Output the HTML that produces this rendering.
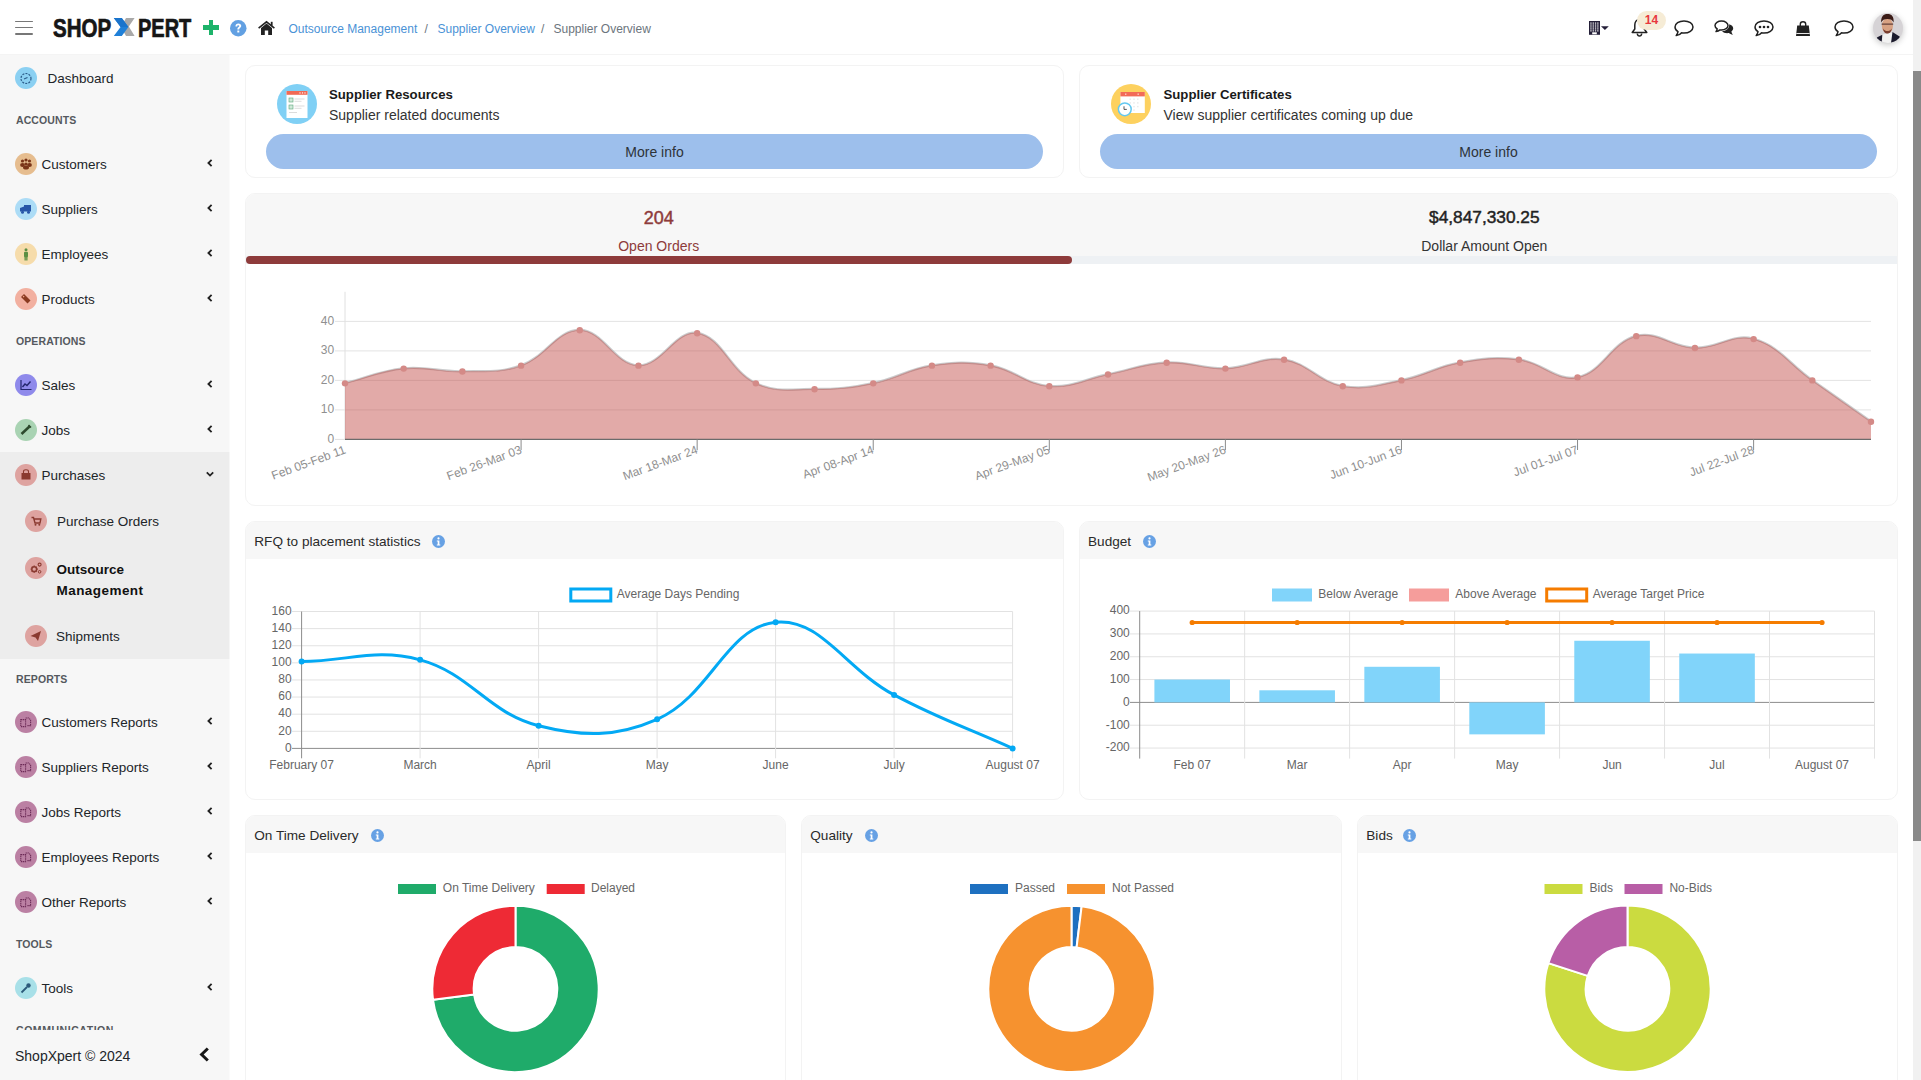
<!DOCTYPE html>
<html><head><meta charset="utf-8"><title>Supplier Overview</title>
<style>
html,body{margin:0;padding:0;}
body{width:1921px;height:1080px;overflow:hidden;position:relative;background:#fff;font-family:"Liberation Sans", sans-serif;}
div,svg{box-sizing:border-box;}
svg{position:absolute;overflow:visible;}
</style></head><body>

<div style="position:absolute;left:0px;top:54px;width:1913px;height:1px;background:#f4f4f4"></div>
<div style="position:absolute;left:15px;top:20.5px;width:18px;height:1.7px;background:#777;border-radius:1px"></div>
<div style="position:absolute;left:15px;top:26.7px;width:18px;height:1.7px;background:#777;border-radius:1px"></div>
<div style="position:absolute;left:15px;top:32.9px;width:18px;height:1.7px;background:#777;border-radius:1px"></div>
<div style="position:absolute;left:52.50px;top:15.54px;font-size:25px;line-height:25px;color:#161616;font-weight:bold;white-space:nowrap;transform:scaleX(0.82);transform-origin:0 0;-webkit-text-stroke:0.7px #161616">SHOP</div>
<svg style="left:113px;top:18px" width="23" height="19" viewBox="0 0 23 19">
<polygon points="13,0 21.6,0 15.8,8.6 21.6,18 13,18 8,9" fill="#a9a9a9"/>
<polygon points="0.8,0 8.8,0 15.4,9 8.8,18 0.8,18 7.6,9" fill="#1f80d8"/>
<polygon points="0.8,0 8.8,0 15.4,9 7.6,9" fill="#1a74cc"/>
</svg>
<div style="position:absolute;left:137.50px;top:15.54px;font-size:25px;line-height:25px;color:#161616;font-weight:bold;white-space:nowrap;transform:scaleX(0.80);transform-origin:0 0;-webkit-text-stroke:0.7px #161616">PERT</div>
<div style="position:absolute;left:208.5px;top:20px;width:4.6px;height:15px;background:#1db36a"></div>
<div style="position:absolute;left:203px;top:25.2px;width:15.5px;height:4.6px;background:#1db36a"></div>
<svg style="left:229.8px;top:19.8px" width="16.5" height="16.5" viewBox="0 0 16 16">
<circle cx="8" cy="8" r="8" fill="#62a0e2"/>
<path d="M5.3,6.2 C5.3,4.4 6.5,3.5 8.1,3.5 C9.8,3.5 10.9,4.5 10.9,5.8 C10.9,7.6 8.9,7.6 8.9,9.2 L7.1,9.2 C7.1,7 9,7.1 9,5.9 C9,5.3 8.6,5 8,5 C7.3,5 7,5.5 7,6.2 Z" fill="#fff"/>
<rect x="7.1" y="10.2" width="1.9" height="1.9" fill="#fff"/>
</svg>
<svg style="left:258px;top:21px" width="17" height="14" viewBox="0 0 17 14">
<path d="M0.6,7.2 L8.5,0.8 L16.4,7.2" stroke="#222" stroke-width="1.6" fill="none"/>
<rect x="12.8" y="0.8" width="1.8" height="4" fill="#222"/>
<path d="M3,7 L8.5,2.6 L14,7 L14,14 L10.2,14 L10.2,9.5 L6.8,9.5 L6.8,14 L3,14 Z" fill="#222"/>
</svg>
<div style="position:absolute;left:288.50px;top:22.84px;font-size:12px;line-height:12px;color:#4a92d6;font-weight:normal;white-space:nowrap;">Outsource Management</div>
<div style="position:absolute;left:424.50px;top:22.84px;font-size:12px;line-height:12px;color:#6c757d;font-weight:normal;white-space:nowrap;">/</div>
<div style="position:absolute;left:437.50px;top:22.84px;font-size:12px;line-height:12px;color:#4a92d6;font-weight:normal;white-space:nowrap;">Supplier Overview</div>
<div style="position:absolute;left:541.00px;top:22.84px;font-size:12px;line-height:12px;color:#6c757d;font-weight:normal;white-space:nowrap;">/</div>
<div style="position:absolute;left:553.50px;top:22.84px;font-size:12px;line-height:12px;color:#6c757d;font-weight:normal;white-space:nowrap;">Supplier Overview</div>
<svg style="left:1589px;top:21px" width="21" height="14" viewBox="0 0 21 14">
<rect x="0" y="0" width="11" height="13.8" fill="#241f38"/>
<g fill="#fff"><rect x="1.30" y="1.50" width="1.3" height="1.15"/><rect x="1.30" y="3.45" width="1.3" height="1.15"/><rect x="1.30" y="5.40" width="1.3" height="1.15"/><rect x="1.30" y="7.35" width="1.3" height="1.15"/><rect x="1.30" y="9.30" width="1.3" height="1.15"/><rect x="3.60" y="1.50" width="1.3" height="1.15"/><rect x="3.60" y="3.45" width="1.3" height="1.15"/><rect x="3.60" y="5.40" width="1.3" height="1.15"/><rect x="3.60" y="7.35" width="1.3" height="1.15"/><rect x="3.60" y="9.30" width="1.3" height="1.15"/><rect x="5.90" y="1.50" width="1.3" height="1.15"/><rect x="5.90" y="3.45" width="1.3" height="1.15"/><rect x="5.90" y="5.40" width="1.3" height="1.15"/><rect x="5.90" y="7.35" width="1.3" height="1.15"/><rect x="5.90" y="9.30" width="1.3" height="1.15"/><rect x="8.20" y="1.50" width="1.3" height="1.15"/><rect x="8.20" y="3.45" width="1.3" height="1.15"/><rect x="8.20" y="5.40" width="1.3" height="1.15"/><rect x="8.20" y="7.35" width="1.3" height="1.15"/><rect x="8.20" y="9.30" width="1.3" height="1.15"/><rect x="3.2" y="11.3" width="4.6" height="2"/></g>
<polygon points="12,5.3 19.8,5.3 15.9,8.9" fill="#241f38"/>
</svg>
<svg style="left:1631px;top:17.5px" width="17" height="19" viewBox="0 0 17 19">
<path d="M8.5,1.5 C5.3,1.5 3.8,4 3.8,7 L3.8,11 L1.2,14.5 L15.8,14.5 L13.2,11 L13.2,7 C13.2,4 11.7,1.5 8.5,1.5 Z" stroke="#222" stroke-width="1.5" fill="none" stroke-linejoin="round"/>
<path d="M6.3,15.5 C6.5,17.3 7.4,18 8.5,18 C9.6,18 10.5,17.3 10.7,15.5" stroke="#222" stroke-width="1.5" fill="none"/>
</svg>
<div style="position:absolute;left:1637px;top:10.5px;width:29px;height:19.5px;background:#f6ecd6;border-radius:10px"></div>
<div style="position:absolute;left:1636.50px;top:14.24px;width:30px;text-align:center;font-size:12px;line-height:12px;color:#e8383d;font-weight:bold;white-space:nowrap;">14</div>
<svg style="left:1673.5px;top:19.8px" width="20" height="17" viewBox="0 0 20 17">
<path d="M10,1 C5,1 1,3.6 1,7 C1,8.9 2.2,10.5 4,11.6 C3.8,13 3.2,14.3 2.2,15.6 C4.6,15.3 6.5,14.3 7.6,12.8 C8.4,12.95 9.2,13 10,13 C15,13 19,10.4 19,7 C19,3.6 15,1 10,1 Z" stroke="#222" stroke-width="1.5" fill="none" stroke-linejoin="round"/>
</svg>
<svg style="left:1713.5px;top:20px" width="20" height="16" viewBox="0 0 20 16">
<path d="M7.5,1 C3.9,1 1,3 1,5.5 C1,6.9 1.9,8.1 3.2,8.9 C3,9.9 2.6,10.8 2,11.6 C3.7,11.4 5,10.8 5.9,9.9 C6.4,10 7,10 7.5,10 C11.1,10 14,8 14,5.5 C14,3 11.1,1 7.5,1 Z" stroke="#222" stroke-width="1.5" fill="none" stroke-linejoin="round"/>
<path d="M15.2,4.2 C17.6,4.8 19.2,6.4 19.2,8.3 C19.2,9.6 18.5,10.7 17.4,11.5 C17.6,12.6 18.1,13.7 18.9,14.8 C17.2,14.6 15.8,14 14.8,13.1 C14.3,13.2 13.8,13.2 13.2,13.2 C11,13.2 9.1,12.4 8,11.2 C12,11 15.6,8.6 15.2,4.2 Z" fill="#222"/>
</svg>
<svg style="left:1753.5px;top:19.8px" width="20" height="17" viewBox="0 0 20 17">
<path d="M10,1 C5,1 1,3.6 1,7 C1,8.9 2.2,10.5 4,11.6 C3.8,13 3.2,14.3 2.2,15.6 C4.6,15.3 6.5,14.3 7.6,12.8 C8.4,12.95 9.2,13 10,13 C15,13 19,10.4 19,7 C19,3.6 15,1 10,1 Z" stroke="#222" stroke-width="1.5" fill="none" stroke-linejoin="round"/>
<circle cx="6" cy="7" r="1.3" fill="#222"/><circle cx="10" cy="7" r="1.3" fill="#222"/><circle cx="14" cy="7" r="1.3" fill="#222"/>
</svg>
<svg style="left:1796px;top:20.5px" width="14" height="15" viewBox="0 0 14 15">
<path d="M4.3,5 L4.3,3.2 C4.3,1.8 5.4,0.8 7,0.8 C8.6,0.8 9.7,1.8 9.7,3.2 L9.7,5" stroke="#222" stroke-width="1.4" fill="none"/>
<path d="M1.2,4.5 L12.8,4.5 L14,15 L0,15 Z" fill="#222"/>
<rect x="0.3" y="12" width="13.4" height="0.9" fill="#fff"/>
</svg>
<svg style="left:1833.5px;top:19.8px" width="20" height="17" viewBox="0 0 20 17">
<path d="M10,1 C5,1 1,3.6 1,7 C1,8.9 2.2,10.5 4,11.6 C3.8,13 3.2,14.3 2.2,15.6 C4.6,15.3 6.5,14.3 7.6,12.8 C8.4,12.95 9.2,13 10,13 C15,13 19,10.4 19,7 C19,3.6 15,1 10,1 Z" stroke="#222" stroke-width="1.5" fill="none" stroke-linejoin="round"/>
</svg>
<div style="position:absolute;left:1873px;top:13px;width:30px;height:30px;border-radius:50%;background:#d6d3d6;box-shadow:0 2px 6px rgba(0,0,0,0.22);overflow:hidden">
<svg style="left:0;top:0" width="30" height="30" viewBox="0 0 30 30">
<polygon points="9.3,21.5 19.5,19.5 19.5,30 9.3,30" fill="#f2f2f2"/>
<polygon points="3.9,24.6 9.3,21.8 8.6,30 3,30" fill="#1b1a2c"/>
<polygon points="19.5,19.1 26.9,23.8 27,30 18,30" fill="#1b1a2c"/>
<ellipse cx="14.4" cy="12.8" rx="5.6" ry="7.4" fill="#d8a283"/>
<path d="M8.2,9.5 C7.8,3.5 10.5,1 14.5,1 C18.5,1 21.2,3.5 20.6,9.5 C19.6,7 17.5,6 14.4,6 C11.4,6 9.2,7 8.2,9.5 Z" fill="#3a1b16"/>
<rect x="8.6" y="10.6" width="11.6" height="1" fill="#4a2a28"/>
<path d="M10,15.5 C10.5,19.5 12.5,20.5 14.4,20.5 C16.3,20.5 18.3,19.5 18.8,15.5 C17.5,17.5 16,18 14.4,18 C12.8,18 11.3,17.5 10,15.5 Z" fill="#7a3f30"/>
</svg></div>
<div style="position:absolute;left:1913px;top:0px;width:8px;height:1080px;background:#f1f1f1"></div>
<div style="position:absolute;left:1913px;top:71px;width:8px;height:770px;background:#898989"></div>
<div style="position:absolute;left:0px;top:55px;width:229px;height:1025px;background:#f7f7f7;box-shadow:1px 0 0 #fbfbfb"></div>
<div style="position:absolute;left:0px;top:452px;width:229px;height:207px;background:#ededed;box-shadow:1px 0 0 #f6f6f6"></div>
<svg style="left:15px;top:67px" width="22" height="22" viewBox="0 0 22 22"><circle cx="11" cy="11" r="11" fill="#8bd0f2"/><circle cx="11" cy="11.5" r="5" stroke="#2b5c8a" stroke-width="1.2" fill="none" stroke-dasharray="2 1.2"/><path d="M9,12 L12.5,10.5" stroke="#2b5c8a" stroke-width="1.2"/></svg>
<div style="position:absolute;left:47.50px;top:71.57px;font-size:13.5px;line-height:13.5px;color:#212529;font-weight:normal;white-space:nowrap;">Dashboard</div>
<div style="position:absolute;left:16.00px;top:114.91px;font-size:10.5px;line-height:10.5px;color:#55595e;font-weight:bold;white-space:nowrap;letter-spacing:0.1px">ACCOUNTS</div>
<svg style="left:15px;top:153px" width="22" height="22" viewBox="0 0 22 22"><circle cx="11" cy="11" r="11" fill="#e6bd8f"/><g fill="#7a3518"><circle cx="7.5" cy="8" r="1.6"/><circle cx="11" cy="7" r="1.6"/><circle cx="14.5" cy="8" r="1.6"/><ellipse cx="7.5" cy="12" rx="2.4" ry="2"/><ellipse cx="14.5" cy="12" rx="2.4" ry="2"/><circle cx="11" cy="11" r="1.6"/><ellipse cx="11" cy="14.5" rx="3" ry="2"/></g></svg>
<div style="position:absolute;left:41.50px;top:157.57px;font-size:13.5px;line-height:13.5px;color:#212529;font-weight:normal;white-space:nowrap;">Customers</div>
<svg style="left:207px;top:159px" width="6" height="8" viewBox="0 0 6 8"><path d="M4.6,0.8 L1.4,4 L4.6,7.2" stroke="#222" stroke-width="1.8" fill="none"/></svg>
<svg style="left:15px;top:198px" width="22" height="22" viewBox="0 0 22 22"><circle cx="11" cy="11" r="11" fill="#acdcf6"/><g fill="#2756a8"><rect x="9" y="7" width="7" height="6.5"/><path d="M5,10 L9,8.5 L9,13.5 L5,13.5 Z"/><circle cx="7.5" cy="14.2" r="1.5"/><circle cx="13.5" cy="14.2" r="1.5"/></g></svg>
<div style="position:absolute;left:41.50px;top:202.57px;font-size:13.5px;line-height:13.5px;color:#212529;font-weight:normal;white-space:nowrap;">Suppliers</div>
<svg style="left:207px;top:204px" width="6" height="8" viewBox="0 0 6 8"><path d="M4.6,0.8 L1.4,4 L4.6,7.2" stroke="#222" stroke-width="1.8" fill="none"/></svg>
<svg style="left:15px;top:243px" width="22" height="22" viewBox="0 0 22 22"><circle cx="11" cy="11" r="11" fill="#f6dcab"/><g fill="#5c8f44"><circle cx="11" cy="6.8" r="1.5"/><rect x="9" y="8.8" width="4" height="5.5" rx="1"/><rect x="9.5" y="14" width="1.3" height="3.5"/><rect x="11.2" y="14" width="1.3" height="3.5"/></g></svg>
<div style="position:absolute;left:41.50px;top:247.57px;font-size:13.5px;line-height:13.5px;color:#212529;font-weight:normal;white-space:nowrap;">Employees</div>
<svg style="left:207px;top:249px" width="6" height="8" viewBox="0 0 6 8"><path d="M4.6,0.8 L1.4,4 L4.6,7.2" stroke="#222" stroke-width="1.8" fill="none"/></svg>
<svg style="left:15px;top:288px" width="22" height="22" viewBox="0 0 22 22"><circle cx="11" cy="11" r="11" fill="#f2b0a0"/><path d="M6,9 L9,6 L15.5,12.5 L12.5,15.5 Z" fill="#8a3a20"/><circle cx="8.6" cy="8.6" r="0.8" fill="#f0a08a"/></svg>
<div style="position:absolute;left:41.50px;top:292.57px;font-size:13.5px;line-height:13.5px;color:#212529;font-weight:normal;white-space:nowrap;">Products</div>
<svg style="left:207px;top:294px" width="6" height="8" viewBox="0 0 6 8"><path d="M4.6,0.8 L1.4,4 L4.6,7.2" stroke="#222" stroke-width="1.8" fill="none"/></svg>
<div style="position:absolute;left:16.00px;top:336.11px;font-size:10.5px;line-height:10.5px;color:#55595e;font-weight:bold;white-space:nowrap;letter-spacing:0.1px">OPERATIONS</div>
<svg style="left:15px;top:374px" width="22" height="22" viewBox="0 0 22 22"><circle cx="11" cy="11" r="11" fill="#8f8aeb"/><path d="M6,6 L6,15.5 L16.5,15.5" stroke="#23266e" stroke-width="1.2" fill="none"/><path d="M7.5,13 L10,10 L12,11.5 L15.5,7.5" stroke="#23266e" stroke-width="1.4" fill="none"/></svg>
<div style="position:absolute;left:41.50px;top:378.57px;font-size:13.5px;line-height:13.5px;color:#212529;font-weight:normal;white-space:nowrap;">Sales</div>
<svg style="left:207px;top:380px" width="6" height="8" viewBox="0 0 6 8"><path d="M4.6,0.8 L1.4,4 L4.6,7.2" stroke="#222" stroke-width="1.8" fill="none"/></svg>
<svg style="left:15px;top:419px" width="22" height="22" viewBox="0 0 22 22"><circle cx="11" cy="11" r="11" fill="#a9d3b3"/><path d="M6.5,15 L15,7" stroke="#2d4a2d" stroke-width="2.6"/><path d="M13.5,6 L16,8.5" stroke="#2d4a2d" stroke-width="1.6"/></svg>
<div style="position:absolute;left:41.50px;top:423.57px;font-size:13.5px;line-height:13.5px;color:#212529;font-weight:normal;white-space:nowrap;">Jobs</div>
<svg style="left:207px;top:425px" width="6" height="8" viewBox="0 0 6 8"><path d="M4.6,0.8 L1.4,4 L4.6,7.2" stroke="#222" stroke-width="1.8" fill="none"/></svg>
<svg style="left:15px;top:464px" width="22" height="22" viewBox="0 0 22 22"><circle cx="11" cy="11" r="11" fill="#dea3a0"/><path d="M8.5,9 L8.5,7.5 C8.5,6.3 9.5,5.8 11,5.8 C12.5,5.8 13.5,6.3 13.5,7.5 L13.5,9" stroke="#8a3a30" stroke-width="1.1" fill="none"/><rect x="6.5" y="9" width="9" height="6.5" fill="#8a3a30"/></svg>
<div style="position:absolute;left:41.50px;top:468.57px;font-size:13.5px;line-height:13.5px;color:#212529;font-weight:normal;white-space:nowrap;">Purchases</div>
<svg style="left:205.5px;top:471px" width="8" height="6" viewBox="0 0 8 6"><path d="M0.8,1.4 L4,4.6 L7.2,1.4" stroke="#222" stroke-width="1.8" fill="none"/></svg>
<svg style="left:25px;top:510px" width="22" height="22" viewBox="0 0 22 22"><circle cx="11" cy="11" r="11" fill="#dea3a0"/><path d="M6.5,7.5 L8.5,7.5 L10,13 L15,13 L15.8,9 L9,9" stroke="#8a3a30" stroke-width="1.4" fill="none"/><circle cx="10.5" cy="14.8" r="1" fill="#8a3a30"/><circle cx="14.3" cy="14.8" r="1" fill="#8a3a30"/></svg>
<div style="position:absolute;left:57.00px;top:514.57px;font-size:13.5px;line-height:13.5px;color:#212529;font-weight:normal;white-space:nowrap;">Purchase Orders</div>
<svg style="left:25px;top:556.5px" width="22" height="22" viewBox="0 0 22 22"><circle cx="11" cy="11" r="11" fill="#dea3a0"/><circle cx="9.2" cy="12.2" r="2.4" stroke="#8a3a30" stroke-width="1.5" fill="none"/><g stroke="#8a3a30" stroke-width="1.3"><path d="M9.2,8.6 V9.4 M9.2,15 V15.8 M5.6,12.2 H6.4 M12,12.2 H12.8 M6.7,9.7 L7.2,10.2 M11.2,14.2 L11.7,14.7 M6.7,14.7 L7.2,14.2 M11.2,10.2 L11.7,9.7"/></g><circle cx="14.6" cy="7.6" r="1.5" stroke="#8a3a30" stroke-width="1.1" fill="none"/><circle cx="14.6" cy="14.8" r="1.3" stroke="#8a3a30" stroke-width="1" fill="none"/></svg>
<div style="position:absolute;left:56.50px;top:563.07px;font-size:13.5px;line-height:13.5px;color:#111;font-weight:bold;white-space:nowrap;">Outsource</div>
<div style="position:absolute;left:56.50px;top:583.87px;font-size:13.5px;line-height:13.5px;color:#111;font-weight:bold;white-space:nowrap;letter-spacing:0.45px">Management</div>
<svg style="left:25px;top:625px" width="22" height="22" viewBox="0 0 22 22"><circle cx="11" cy="11" r="11" fill="#dea3a0"/><path d="M5.5,11 L16,6 L13,16 L10.5,12.5 Z" fill="#8a3a30"/></svg>
<div style="position:absolute;left:56.00px;top:629.57px;font-size:13.5px;line-height:13.5px;color:#212529;font-weight:normal;white-space:nowrap;">Shipments</div>
<div style="position:absolute;left:16.00px;top:674.11px;font-size:10.5px;line-height:10.5px;color:#55595e;font-weight:bold;white-space:nowrap;letter-spacing:0.1px">REPORTS</div>
<svg style="left:15px;top:711px" width="22" height="22" viewBox="0 0 22 22"><circle cx="11" cy="11" r="11" fill="#bb80a3"/><path d="M5.8,8.6 L10.6,8.6 L10.6,15.6 L5.8,15.6 Z" stroke="#6e2c58" stroke-width="1.1" fill="none" stroke-dasharray="1.3 0.6"/><path d="M10.6,7 L13.6,7 L15.6,9 L15.6,14.6 L12,14.6" stroke="#6e2c58" stroke-width="1.1" fill="none" stroke-dasharray="1.3 0.6"/></svg>
<div style="position:absolute;left:41.50px;top:715.57px;font-size:13.5px;line-height:13.5px;color:#212529;font-weight:normal;white-space:nowrap;">Customers Reports</div>
<svg style="left:207px;top:717px" width="6" height="8" viewBox="0 0 6 8"><path d="M4.6,0.8 L1.4,4 L4.6,7.2" stroke="#222" stroke-width="1.8" fill="none"/></svg>
<svg style="left:15px;top:756px" width="22" height="22" viewBox="0 0 22 22"><circle cx="11" cy="11" r="11" fill="#bb80a3"/><path d="M5.8,8.6 L10.6,8.6 L10.6,15.6 L5.8,15.6 Z" stroke="#6e2c58" stroke-width="1.1" fill="none" stroke-dasharray="1.3 0.6"/><path d="M10.6,7 L13.6,7 L15.6,9 L15.6,14.6 L12,14.6" stroke="#6e2c58" stroke-width="1.1" fill="none" stroke-dasharray="1.3 0.6"/></svg>
<div style="position:absolute;left:41.50px;top:760.57px;font-size:13.5px;line-height:13.5px;color:#212529;font-weight:normal;white-space:nowrap;">Suppliers Reports</div>
<svg style="left:207px;top:762px" width="6" height="8" viewBox="0 0 6 8"><path d="M4.6,0.8 L1.4,4 L4.6,7.2" stroke="#222" stroke-width="1.8" fill="none"/></svg>
<svg style="left:15px;top:801px" width="22" height="22" viewBox="0 0 22 22"><circle cx="11" cy="11" r="11" fill="#bb80a3"/><path d="M5.8,8.6 L10.6,8.6 L10.6,15.6 L5.8,15.6 Z" stroke="#6e2c58" stroke-width="1.1" fill="none" stroke-dasharray="1.3 0.6"/><path d="M10.6,7 L13.6,7 L15.6,9 L15.6,14.6 L12,14.6" stroke="#6e2c58" stroke-width="1.1" fill="none" stroke-dasharray="1.3 0.6"/></svg>
<div style="position:absolute;left:41.50px;top:805.57px;font-size:13.5px;line-height:13.5px;color:#212529;font-weight:normal;white-space:nowrap;">Jobs Reports</div>
<svg style="left:207px;top:807px" width="6" height="8" viewBox="0 0 6 8"><path d="M4.6,0.8 L1.4,4 L4.6,7.2" stroke="#222" stroke-width="1.8" fill="none"/></svg>
<svg style="left:15px;top:846px" width="22" height="22" viewBox="0 0 22 22"><circle cx="11" cy="11" r="11" fill="#bb80a3"/><path d="M5.8,8.6 L10.6,8.6 L10.6,15.6 L5.8,15.6 Z" stroke="#6e2c58" stroke-width="1.1" fill="none" stroke-dasharray="1.3 0.6"/><path d="M10.6,7 L13.6,7 L15.6,9 L15.6,14.6 L12,14.6" stroke="#6e2c58" stroke-width="1.1" fill="none" stroke-dasharray="1.3 0.6"/></svg>
<div style="position:absolute;left:41.50px;top:850.57px;font-size:13.5px;line-height:13.5px;color:#212529;font-weight:normal;white-space:nowrap;">Employees Reports</div>
<svg style="left:207px;top:852px" width="6" height="8" viewBox="0 0 6 8"><path d="M4.6,0.8 L1.4,4 L4.6,7.2" stroke="#222" stroke-width="1.8" fill="none"/></svg>
<svg style="left:15px;top:891px" width="22" height="22" viewBox="0 0 22 22"><circle cx="11" cy="11" r="11" fill="#bb80a3"/><path d="M5.8,8.6 L10.6,8.6 L10.6,15.6 L5.8,15.6 Z" stroke="#6e2c58" stroke-width="1.1" fill="none" stroke-dasharray="1.3 0.6"/><path d="M10.6,7 L13.6,7 L15.6,9 L15.6,14.6 L12,14.6" stroke="#6e2c58" stroke-width="1.1" fill="none" stroke-dasharray="1.3 0.6"/></svg>
<div style="position:absolute;left:41.50px;top:895.57px;font-size:13.5px;line-height:13.5px;color:#212529;font-weight:normal;white-space:nowrap;">Other Reports</div>
<svg style="left:207px;top:897px" width="6" height="8" viewBox="0 0 6 8"><path d="M4.6,0.8 L1.4,4 L4.6,7.2" stroke="#222" stroke-width="1.8" fill="none"/></svg>
<div style="position:absolute;left:16.00px;top:939.11px;font-size:10.5px;line-height:10.5px;color:#55595e;font-weight:bold;white-space:nowrap;letter-spacing:0.1px">TOOLS</div>
<svg style="left:15px;top:977px" width="22" height="22" viewBox="0 0 22 22"><circle cx="11" cy="11" r="11" fill="#a8e0e8"/><path d="M6.5,15.5 L12,10" stroke="#2b5a7a" stroke-width="1.8"/><circle cx="13.5" cy="8.5" r="2.2" fill="#2b5a7a"/></svg>
<div style="position:absolute;left:41.50px;top:981.57px;font-size:13.5px;line-height:13.5px;color:#212529;font-weight:normal;white-space:nowrap;">Tools</div>
<svg style="left:207px;top:983px" width="6" height="8" viewBox="0 0 6 8"><path d="M4.6,0.8 L1.4,4 L4.6,7.2" stroke="#222" stroke-width="1.8" fill="none"/></svg>
<div style="position:absolute;left:0;top:1000px;width:230px;height:30px;overflow:hidden"><div style="position:absolute;left:16.00px;top:25.11px;font-size:10.5px;line-height:10.5px;color:#55595e;font-weight:bold;white-space:nowrap;letter-spacing:0.55px">COMMUNICATION</div></div>
<div style="position:absolute;left:15.00px;top:1048.75px;font-size:14px;line-height:14px;color:#212529;font-weight:normal;white-space:nowrap;">ShopXpert &copy; 2024</div>
<svg style="left:199px;top:1047px" width="11" height="15" viewBox="0 0 11 15"><path d="M8.8,1.5 L2.6,7.5 L8.8,13.5" stroke="#161616" stroke-width="3" fill="none"/></svg>
<div style="position:absolute;left:245px;top:65px;width:819px;height:113px;border:1px solid #f3f3f3;border-radius:10px;background:#fff;overflow:hidden;"></div>
<div style="position:absolute;left:329.00px;top:87.83px;font-size:13.2px;line-height:13.2px;color:#1a1a1a;font-weight:bold;white-space:nowrap;">Supplier Resources</div>
<div style="position:absolute;left:329.00px;top:107.95px;font-size:14px;line-height:14px;color:#333;font-weight:normal;white-space:nowrap;">Supplier related documents</div>
<div style="position:absolute;left:266px;top:134px;width:777px;height:35px;background:#9dbfec;border-radius:17.5px"></div>
<div style="position:absolute;left:554.50px;top:145.45px;width:200px;text-align:center;font-size:14px;line-height:14px;color:#2d3338;font-weight:normal;white-space:nowrap;">More info</div>
<svg style="left:277px;top:84px" width="40" height="40" viewBox="0 0 40 40"><circle cx="20" cy="20" r="20" fill="#80d0f5"/></svg>
<div style="position:absolute;left:1079px;top:65px;width:819px;height:113px;border:1px solid #f3f3f3;border-radius:10px;background:#fff;overflow:hidden;"></div>
<div style="position:absolute;left:1163.50px;top:87.83px;font-size:13.2px;line-height:13.2px;color:#1a1a1a;font-weight:bold;white-space:nowrap;">Supplier Certificates</div>
<div style="position:absolute;left:1163.50px;top:107.95px;font-size:14px;line-height:14px;color:#333;font-weight:normal;white-space:nowrap;">View supplier certificates coming up due</div>
<div style="position:absolute;left:1100px;top:134px;width:777px;height:35px;background:#9dbfec;border-radius:17.5px"></div>
<div style="position:absolute;left:1388.50px;top:145.45px;width:200px;text-align:center;font-size:14px;line-height:14px;color:#2d3338;font-weight:normal;white-space:nowrap;">More info</div>
<svg style="left:1111.3px;top:84px" width="40" height="40" viewBox="0 0 40 40"><circle cx="20" cy="20" r="20" fill="#fdd15f"/></svg>
<svg style="left:277px;top:84px" width="40" height="40" viewBox="0 0 40 40">
<rect x="9.5" y="7" width="21" height="27" fill="#fff"/>
<rect x="9.5" y="7" width="21" height="3.8" fill="#f16a55"/>
<g fill="#fff"><circle cx="23" cy="8.9" r="0.7"/><circle cx="25.5" cy="8.9" r="0.7"/><circle cx="28" cy="8.9" r="0.7"/></g>
<rect x="12" y="14" width="4" height="4" fill="#cfe9d9" stroke="#5aa67a" stroke-width="0.6"/>
<rect x="12" y="21" width="4" height="4" fill="#cfe9d9" stroke="#5aa67a" stroke-width="0.6"/>
<g fill="#dcdcdc"><rect x="17.5" y="14.5" width="10" height="1"/><rect x="17.5" y="16.8" width="7" height="1"/><rect x="17.5" y="21.5" width="10" height="1"/><rect x="17.5" y="23.8" width="7" height="1"/><rect x="12" y="28" width="8" height="1"/></g>
</svg>
<svg style="left:1111.3px;top:84px" width="40" height="40" viewBox="0 0 40 40">
<rect x="9.4" y="8" width="24.4" height="21" fill="#fff"/>
<rect x="9.4" y="8" width="24.4" height="4.4" fill="#f26b58"/>
<g fill="#fbe6e0"><rect x="14" y="9.6" width="1.4" height="1.1"/><rect x="26.5" y="9.6" width="1.4" height="1.1"/></g>
<g fill="#e8e8e8"><rect x="18.5" y="14.5" width="1.4" height="1.4"/><rect x="22.3" y="14.5" width="1.4" height="1.4"/><rect x="26.1" y="14.5" width="1.4" height="1.4"/><rect x="18.5" y="18.2" width="1.4" height="1.4"/><rect x="22.3" y="18.2" width="1.4" height="1.4"/><rect x="26.1" y="18.2" width="1.4" height="1.4"/><rect x="22.3" y="21.9" width="1.4" height="1.4"/><rect x="26.1" y="21.9" width="1.4" height="1.4"/><rect x="22.3" y="25.4" width="1.4" height="1.4"/></g>
<circle cx="13.8" cy="25.3" r="6.4" fill="#fff" stroke="#63c8f0" stroke-width="1.5"/>
<path d="M13,22.3 L13,25.4 L15.8,25.4" stroke="#444" stroke-width="0.9" fill="none"/>
</svg>
<div style="position:absolute;left:245px;top:193px;width:1653px;height:313px;border:1px solid #f3f3f3;border-radius:10px;background:#fff;overflow:hidden"><div style="position:absolute;left:0;top:0;width:1651px;height:62px;background:#f7f7f7"></div><div style="position:absolute;left:0;top:62px;width:1651px;height:8px;background:#eef1f4"></div><div style="position:absolute;left:0;top:62px;width:826px;height:8px;background:#8e3b3b;border-radius:4px"></div></div>
<div style="position:absolute;left:558.70px;top:208.66px;width:200px;text-align:center;font-size:18px;line-height:18px;color:#8e3b3b;font-weight:normal;white-space:nowrap;-webkit-text-stroke:0.45px #8e3b3b">204</div>
<div style="position:absolute;left:558.70px;top:238.95px;width:200px;text-align:center;font-size:14px;line-height:14px;color:#8e3b3b;font-weight:normal;white-space:nowrap;">Open Orders</div>
<div style="position:absolute;left:1334.30px;top:209.26px;width:300px;text-align:center;font-size:17.3px;line-height:17.3px;color:#222;font-weight:normal;white-space:nowrap;-webkit-text-stroke:0.45px #222">$4,847,330.25</div>
<div style="position:absolute;left:1334.30px;top:238.95px;width:300px;text-align:center;font-size:14px;line-height:14px;color:#333;font-weight:normal;white-space:nowrap;">Dollar Amount Open</div>
<div style="position:absolute;left:245px;top:521px;width:819px;height:279px;border:1px solid #f3f3f3;border-radius:10px;background:#fff;overflow:hidden"><div style="position:absolute;left:0;top:0;width:819px;height:37px;background:#f7f7f7"></div></div>
<div style="position:absolute;left:1079px;top:521px;width:819px;height:279px;border:1px solid #f3f3f3;border-radius:10px;background:#fff;overflow:hidden"><div style="position:absolute;left:0;top:0;width:819px;height:37px;background:#f7f7f7"></div></div>
<div style="position:absolute;left:254.30px;top:534.89px;font-size:13.6px;line-height:13.6px;color:#2a2a2a;font-weight:normal;white-space:nowrap;">RFQ to placement statistics</div>
<svg style="left:432.3px;top:534.5px" width="13" height="13" viewBox="0 0 13 13"><circle cx="6.5" cy="6.5" r="6.5" fill="#67a1e4"/><circle cx="6.5" cy="3.4" r="1.1" fill="#fff"/><path d="M4.8,5.4 L7.4,5.4 L7.4,9.4 L8.3,9.4 L8.3,10.4 L4.8,10.4 L4.8,9.4 L5.7,9.4 L5.7,6.4 L4.8,6.4 Z" fill="#fff"/></svg>
<div style="position:absolute;left:1088.00px;top:534.89px;font-size:13.6px;line-height:13.6px;color:#2a2a2a;font-weight:normal;white-space:nowrap;">Budget</div>
<svg style="left:1143.3px;top:534.5px" width="13" height="13" viewBox="0 0 13 13"><circle cx="6.5" cy="6.5" r="6.5" fill="#67a1e4"/><circle cx="6.5" cy="3.4" r="1.1" fill="#fff"/><path d="M4.8,5.4 L7.4,5.4 L7.4,9.4 L8.3,9.4 L8.3,10.4 L4.8,10.4 L4.8,9.4 L5.7,9.4 L5.7,6.4 L4.8,6.4 Z" fill="#fff"/></svg>
<div style="position:absolute;left:245px;top:815px;width:541px;height:300px;border:1px solid #f3f3f3;border-radius:10px;background:#fff;overflow:hidden"><div style="position:absolute;left:0;top:0;width:541px;height:37px;background:#f7f7f7"></div></div>
<div style="position:absolute;left:254.30px;top:828.69px;font-size:13.6px;line-height:13.6px;color:#2a2a2a;font-weight:normal;white-space:nowrap;">On Time Delivery</div>
<svg style="left:370.5px;top:828.5px" width="13" height="13" viewBox="0 0 13 13"><circle cx="6.5" cy="6.5" r="6.5" fill="#67a1e4"/><circle cx="6.5" cy="3.4" r="1.1" fill="#fff"/><path d="M4.8,5.4 L7.4,5.4 L7.4,9.4 L8.3,9.4 L8.3,10.4 L4.8,10.4 L4.8,9.4 L5.7,9.4 L5.7,6.4 L4.8,6.4 Z" fill="#fff"/></svg>
<div style="position:absolute;left:801px;top:815px;width:541px;height:300px;border:1px solid #f3f3f3;border-radius:10px;background:#fff;overflow:hidden"><div style="position:absolute;left:0;top:0;width:541px;height:37px;background:#f7f7f7"></div></div>
<div style="position:absolute;left:810.30px;top:828.69px;font-size:13.6px;line-height:13.6px;color:#2a2a2a;font-weight:normal;white-space:nowrap;">Quality</div>
<svg style="left:864.5px;top:828.5px" width="13" height="13" viewBox="0 0 13 13"><circle cx="6.5" cy="6.5" r="6.5" fill="#67a1e4"/><circle cx="6.5" cy="3.4" r="1.1" fill="#fff"/><path d="M4.8,5.4 L7.4,5.4 L7.4,9.4 L8.3,9.4 L8.3,10.4 L4.8,10.4 L4.8,9.4 L5.7,9.4 L5.7,6.4 L4.8,6.4 Z" fill="#fff"/></svg>
<div style="position:absolute;left:1357px;top:815px;width:541px;height:300px;border:1px solid #f3f3f3;border-radius:10px;background:#fff;overflow:hidden"><div style="position:absolute;left:0;top:0;width:541px;height:37px;background:#f7f7f7"></div></div>
<div style="position:absolute;left:1366.30px;top:828.69px;font-size:13.6px;line-height:13.6px;color:#2a2a2a;font-weight:normal;white-space:nowrap;">Bids</div>
<svg style="left:1402.5px;top:828.5px" width="13" height="13" viewBox="0 0 13 13"><circle cx="6.5" cy="6.5" r="6.5" fill="#67a1e4"/><circle cx="6.5" cy="3.4" r="1.1" fill="#fff"/><path d="M4.8,5.4 L7.4,5.4 L7.4,9.4 L8.3,9.4 L8.3,10.4 L4.8,10.4 L4.8,9.4 L5.7,9.4 L5.7,6.4 L4.8,6.4 Z" fill="#fff"/></svg>
<svg style="left:0;top:0" width="1921" height="1080" viewBox="0 0 1921 1080">
<line x1="335" y1="409.90" x2="1871.0" y2="409.90" stroke="#e3e3e3" stroke-width="1"/>
<line x1="335" y1="380.40" x2="1871.0" y2="380.40" stroke="#e3e3e3" stroke-width="1"/>
<line x1="335" y1="350.90" x2="1871.0" y2="350.90" stroke="#e3e3e3" stroke-width="1"/>
<line x1="335" y1="321.40" x2="1871.0" y2="321.40" stroke="#e3e3e3" stroke-width="1"/>
<line x1="345.0" y1="291.8" x2="345.0" y2="439.4" stroke="#e0e0e0" stroke-width="1"/>
<line x1="335" y1="439.4" x2="345.0" y2="439.4" stroke="#e0e0e0" stroke-width="1"/>
<path d="M345.00,383.35 C368.48,377.45 379.87,370.99 403.69,368.60 C426.82,366.27 438.95,372.14 462.38,371.55 C485.91,370.96 499.36,373.29 521.08,365.65 C546.31,356.77 556.29,330.25 579.77,330.25 C603.25,330.25 614.73,365.05 638.46,365.65 C661.68,366.23 675.33,329.91 697.15,333.20 C722.28,336.99 729.23,370.64 755.85,383.35 C776.18,393.06 791.06,389.25 814.54,389.25 C838.02,389.25 850.21,387.98 873.23,383.35 C897.16,378.54 907.94,369.27 931.92,365.65 C954.89,362.19 967.82,361.64 990.62,365.65 C1014.78,369.90 1025.38,384.50 1049.31,386.30 C1072.33,388.04 1084.52,379.22 1108.00,374.50 C1131.48,369.78 1143.04,363.89 1166.69,362.70 C1190.00,361.53 1201.98,369.19 1225.38,368.60 C1248.93,368.01 1261.56,356.35 1284.08,359.75 C1308.51,363.43 1318.26,381.99 1342.77,386.30 C1365.21,390.25 1378.44,385.03 1401.46,380.40 C1425.39,375.59 1436.18,366.92 1460.15,362.70 C1483.13,358.66 1495.87,356.86 1518.85,359.75 C1542.82,362.76 1555.91,381.80 1577.54,377.45 C1602.86,372.36 1610.63,342.58 1636.23,336.15 C1657.59,330.78 1671.35,347.36 1694.92,347.95 C1718.30,348.54 1732.36,333.22 1753.62,339.10 C1779.31,346.20 1788.83,363.88 1812.31,380.40 C1835.78,396.92 1847.52,405.18 1871.00,421.70" fill="none" stroke="rgba(175,178,180,0.65)" stroke-width="2.2" transform="translate(0,-0.3)"/>
<path d="M345.00,383.35 C368.48,377.45 379.87,370.99 403.69,368.60 C426.82,366.27 438.95,372.14 462.38,371.55 C485.91,370.96 499.36,373.29 521.08,365.65 C546.31,356.77 556.29,330.25 579.77,330.25 C603.25,330.25 614.73,365.05 638.46,365.65 C661.68,366.23 675.33,329.91 697.15,333.20 C722.28,336.99 729.23,370.64 755.85,383.35 C776.18,393.06 791.06,389.25 814.54,389.25 C838.02,389.25 850.21,387.98 873.23,383.35 C897.16,378.54 907.94,369.27 931.92,365.65 C954.89,362.19 967.82,361.64 990.62,365.65 C1014.78,369.90 1025.38,384.50 1049.31,386.30 C1072.33,388.04 1084.52,379.22 1108.00,374.50 C1131.48,369.78 1143.04,363.89 1166.69,362.70 C1190.00,361.53 1201.98,369.19 1225.38,368.60 C1248.93,368.01 1261.56,356.35 1284.08,359.75 C1308.51,363.43 1318.26,381.99 1342.77,386.30 C1365.21,390.25 1378.44,385.03 1401.46,380.40 C1425.39,375.59 1436.18,366.92 1460.15,362.70 C1483.13,358.66 1495.87,356.86 1518.85,359.75 C1542.82,362.76 1555.91,381.80 1577.54,377.45 C1602.86,372.36 1610.63,342.58 1636.23,336.15 C1657.59,330.78 1671.35,347.36 1694.92,347.95 C1718.30,348.54 1732.36,333.22 1753.62,339.10 C1779.31,346.20 1788.83,363.88 1812.31,380.40 C1835.78,396.92 1847.52,405.18 1871.00,421.70 L1871.0,439.4 L345.0,439.4 Z" fill="rgba(191,66,62,0.45)"/>
<path d="M345.00,383.35 C368.48,377.45 379.87,370.99 403.69,368.60 C426.82,366.27 438.95,372.14 462.38,371.55 C485.91,370.96 499.36,373.29 521.08,365.65 C546.31,356.77 556.29,330.25 579.77,330.25 C603.25,330.25 614.73,365.05 638.46,365.65 C661.68,366.23 675.33,329.91 697.15,333.20 C722.28,336.99 729.23,370.64 755.85,383.35 C776.18,393.06 791.06,389.25 814.54,389.25 C838.02,389.25 850.21,387.98 873.23,383.35 C897.16,378.54 907.94,369.27 931.92,365.65 C954.89,362.19 967.82,361.64 990.62,365.65 C1014.78,369.90 1025.38,384.50 1049.31,386.30 C1072.33,388.04 1084.52,379.22 1108.00,374.50 C1131.48,369.78 1143.04,363.89 1166.69,362.70 C1190.00,361.53 1201.98,369.19 1225.38,368.60 C1248.93,368.01 1261.56,356.35 1284.08,359.75 C1308.51,363.43 1318.26,381.99 1342.77,386.30 C1365.21,390.25 1378.44,385.03 1401.46,380.40 C1425.39,375.59 1436.18,366.92 1460.15,362.70 C1483.13,358.66 1495.87,356.86 1518.85,359.75 C1542.82,362.76 1555.91,381.80 1577.54,377.45 C1602.86,372.36 1610.63,342.58 1636.23,336.15 C1657.59,330.78 1671.35,347.36 1694.92,347.95 C1718.30,348.54 1732.36,333.22 1753.62,339.10 C1779.31,346.20 1788.83,363.88 1812.31,380.40 C1835.78,396.92 1847.52,405.18 1871.00,421.70" fill="none" stroke="rgba(190,120,118,0.55)" stroke-width="0.9"/>
<line x1="345.0" y1="439.4" x2="1871.0" y2="439.4" stroke="#6b6b6b" stroke-width="1.2"/>
<circle cx="345.00" cy="383.35" r="3.2" fill="#d48a87"/>
<circle cx="403.69" cy="368.60" r="3.2" fill="#d48a87"/>
<circle cx="462.38" cy="371.55" r="3.2" fill="#d48a87"/>
<circle cx="521.08" cy="365.65" r="3.2" fill="#d48a87"/>
<circle cx="579.77" cy="330.25" r="3.2" fill="#d48a87"/>
<circle cx="638.46" cy="365.65" r="3.2" fill="#d48a87"/>
<circle cx="697.15" cy="333.20" r="3.2" fill="#d48a87"/>
<circle cx="755.85" cy="383.35" r="3.2" fill="#d48a87"/>
<circle cx="814.54" cy="389.25" r="3.2" fill="#d48a87"/>
<circle cx="873.23" cy="383.35" r="3.2" fill="#d48a87"/>
<circle cx="931.92" cy="365.65" r="3.2" fill="#d48a87"/>
<circle cx="990.62" cy="365.65" r="3.2" fill="#d48a87"/>
<circle cx="1049.31" cy="386.30" r="3.2" fill="#d48a87"/>
<circle cx="1108.00" cy="374.50" r="3.2" fill="#d48a87"/>
<circle cx="1166.69" cy="362.70" r="3.2" fill="#d48a87"/>
<circle cx="1225.38" cy="368.60" r="3.2" fill="#d48a87"/>
<circle cx="1284.08" cy="359.75" r="3.2" fill="#d48a87"/>
<circle cx="1342.77" cy="386.30" r="3.2" fill="#d48a87"/>
<circle cx="1401.46" cy="380.40" r="3.2" fill="#d48a87"/>
<circle cx="1460.15" cy="362.70" r="3.2" fill="#d48a87"/>
<circle cx="1518.85" cy="359.75" r="3.2" fill="#d48a87"/>
<circle cx="1577.54" cy="377.45" r="3.2" fill="#d48a87"/>
<circle cx="1636.23" cy="336.15" r="3.2" fill="#d48a87"/>
<circle cx="1694.92" cy="347.95" r="3.2" fill="#d48a87"/>
<circle cx="1753.62" cy="339.10" r="3.2" fill="#d48a87"/>
<circle cx="1812.31" cy="380.40" r="3.2" fill="#d48a87"/>
<circle cx="1871.00" cy="421.70" r="3.2" fill="#d48a87"/>
<text transform="translate(346.40,453) rotate(-20.2)" text-anchor="end" font-size="12" fill="#8f8f8f">Feb 05-Feb 11</text>
<line x1="521.08" y1="439.4" x2="521.08" y2="450" stroke="#8a8a8a" stroke-width="1"/>
<text transform="translate(522.48,453) rotate(-20.2)" text-anchor="end" font-size="12" fill="#8f8f8f">Feb 26-Mar 03</text>
<line x1="697.15" y1="439.4" x2="697.15" y2="450" stroke="#8a8a8a" stroke-width="1"/>
<text transform="translate(698.55,453) rotate(-20.2)" text-anchor="end" font-size="12" fill="#8f8f8f">Mar 18-Mar 24</text>
<line x1="873.23" y1="439.4" x2="873.23" y2="450" stroke="#8a8a8a" stroke-width="1"/>
<text transform="translate(874.63,453) rotate(-20.2)" text-anchor="end" font-size="12" fill="#8f8f8f">Apr 08-Apr 14</text>
<line x1="1049.31" y1="439.4" x2="1049.31" y2="450" stroke="#8a8a8a" stroke-width="1"/>
<text transform="translate(1050.71,453) rotate(-20.2)" text-anchor="end" font-size="12" fill="#8f8f8f">Apr 29-May 05</text>
<line x1="1225.38" y1="439.4" x2="1225.38" y2="450" stroke="#8a8a8a" stroke-width="1"/>
<text transform="translate(1226.78,453) rotate(-20.2)" text-anchor="end" font-size="12" fill="#8f8f8f">May 20-May 26</text>
<line x1="1401.46" y1="439.4" x2="1401.46" y2="450" stroke="#8a8a8a" stroke-width="1"/>
<text transform="translate(1402.86,453) rotate(-20.2)" text-anchor="end" font-size="12" fill="#8f8f8f">Jun 10-Jun 16</text>
<line x1="1577.54" y1="439.4" x2="1577.54" y2="450" stroke="#8a8a8a" stroke-width="1"/>
<text transform="translate(1578.94,453) rotate(-20.2)" text-anchor="end" font-size="12" fill="#8f8f8f">Jul 01-Jul 07</text>
<line x1="1753.62" y1="439.4" x2="1753.62" y2="450" stroke="#8a8a8a" stroke-width="1"/>
<text transform="translate(1755.02,453) rotate(-20.2)" text-anchor="end" font-size="12" fill="#8f8f8f">Jul 22-Jul 28</text>
<text x="334.2" y="442.80" text-anchor="end" font-size="12" fill="#8f8f8f">0</text>
<text x="334.2" y="413.30" text-anchor="end" font-size="12" fill="#8f8f8f">10</text>
<text x="334.2" y="383.80" text-anchor="end" font-size="12" fill="#8f8f8f">20</text>
<text x="334.2" y="354.30" text-anchor="end" font-size="12" fill="#8f8f8f">30</text>
<text x="334.2" y="324.80" text-anchor="end" font-size="12" fill="#8f8f8f">40</text>
<g>
<line x1="292" y1="748.40" x2="1012.6" y2="748.40" stroke="#8c8c8c" stroke-width="1"/>
<text x="291.6" y="751.70" text-anchor="end" font-size="12" fill="#666">0</text>
<line x1="292" y1="731.29" x2="1012.6" y2="731.29" stroke="#e2e2e2" stroke-width="1"/>
<text x="291.6" y="734.59" text-anchor="end" font-size="12" fill="#666">20</text>
<line x1="292" y1="714.18" x2="1012.6" y2="714.18" stroke="#e2e2e2" stroke-width="1"/>
<text x="291.6" y="717.48" text-anchor="end" font-size="12" fill="#666">40</text>
<line x1="292" y1="697.07" x2="1012.6" y2="697.07" stroke="#e2e2e2" stroke-width="1"/>
<text x="291.6" y="700.37" text-anchor="end" font-size="12" fill="#666">60</text>
<line x1="292" y1="679.96" x2="1012.6" y2="679.96" stroke="#e2e2e2" stroke-width="1"/>
<text x="291.6" y="683.26" text-anchor="end" font-size="12" fill="#666">80</text>
<line x1="292" y1="662.85" x2="1012.6" y2="662.85" stroke="#e2e2e2" stroke-width="1"/>
<text x="291.6" y="666.15" text-anchor="end" font-size="12" fill="#666">100</text>
<line x1="292" y1="645.74" x2="1012.6" y2="645.74" stroke="#e2e2e2" stroke-width="1"/>
<text x="291.6" y="649.04" text-anchor="end" font-size="12" fill="#666">120</text>
<line x1="292" y1="628.63" x2="1012.6" y2="628.63" stroke="#e2e2e2" stroke-width="1"/>
<text x="291.6" y="631.93" text-anchor="end" font-size="12" fill="#666">140</text>
<line x1="292" y1="611.52" x2="1012.6" y2="611.52" stroke="#e2e2e2" stroke-width="1"/>
<text x="291.6" y="614.82" text-anchor="end" font-size="12" fill="#666">160</text>
<line x1="301.60" y1="611.52" x2="301.60" y2="758.3" stroke="#8c8c8c" stroke-width="1"/>
<line x1="420.10" y1="611.52" x2="420.10" y2="758.3" stroke="#e2e2e2" stroke-width="1"/>
<line x1="538.60" y1="611.52" x2="538.60" y2="758.3" stroke="#e2e2e2" stroke-width="1"/>
<line x1="657.10" y1="611.52" x2="657.10" y2="758.3" stroke="#e2e2e2" stroke-width="1"/>
<line x1="775.60" y1="611.52" x2="775.60" y2="758.3" stroke="#e2e2e2" stroke-width="1"/>
<line x1="894.10" y1="611.52" x2="894.10" y2="758.3" stroke="#e2e2e2" stroke-width="1"/>
<line x1="1012.60" y1="611.52" x2="1012.60" y2="758.3" stroke="#e2e2e2" stroke-width="1"/>
<text x="301.60" y="768.8" text-anchor="middle" font-size="12" fill="#666">February 07</text>
<text x="420.10" y="768.8" text-anchor="middle" font-size="12" fill="#666">March</text>
<text x="538.60" y="768.8" text-anchor="middle" font-size="12" fill="#666">April</text>
<text x="657.10" y="768.8" text-anchor="middle" font-size="12" fill="#666">May</text>
<text x="775.60" y="768.8" text-anchor="middle" font-size="12" fill="#666">June</text>
<text x="894.10" y="768.8" text-anchor="middle" font-size="12" fill="#666">July</text>
<text x="1012.60" y="768.8" text-anchor="middle" font-size="12" fill="#666">August 07</text>
<path d="M301.60,661.57 C349.00,660.88 375.88,647.89 420.10,659.86 C470.68,673.55 488.05,713.05 538.60,725.73 C582.85,736.83 615.72,737.39 657.10,719.31 C710.52,695.98 725.90,627.33 775.60,622.21 C820.70,617.57 845.11,668.85 894.10,694.93 C939.91,719.32 965.20,727.01 1012.60,748.40" fill="none" stroke="#03a9f4" stroke-width="3"/>
<circle cx="301.60" cy="661.57" r="3" fill="#03a9f4"/>
<circle cx="420.10" cy="659.86" r="3" fill="#03a9f4"/>
<circle cx="538.60" cy="725.73" r="3" fill="#03a9f4"/>
<circle cx="657.10" cy="719.31" r="3" fill="#03a9f4"/>
<circle cx="775.60" cy="622.21" r="3" fill="#03a9f4"/>
<circle cx="894.10" cy="694.93" r="3" fill="#03a9f4"/>
<circle cx="1012.60" cy="748.40" r="3" fill="#03a9f4"/>
<rect x="570.8" y="589" width="40" height="12" fill="#fff" stroke="#03a9f4" stroke-width="3"/>
<text x="616.8" y="598.3" font-size="12" fill="#666">Average Days Pending</text>
</g>
<line x1="1130" y1="611.08" x2="1874.5" y2="611.08" stroke="#e2e2e2" stroke-width="1"/>
<text x="1129.8" y="614.38" text-anchor="end" font-size="12" fill="#666">400</text>
<line x1="1130" y1="633.91" x2="1874.5" y2="633.91" stroke="#e2e2e2" stroke-width="1"/>
<text x="1129.8" y="637.21" text-anchor="end" font-size="12" fill="#666">300</text>
<line x1="1130" y1="656.74" x2="1874.5" y2="656.74" stroke="#e2e2e2" stroke-width="1"/>
<text x="1129.8" y="660.04" text-anchor="end" font-size="12" fill="#666">200</text>
<line x1="1130" y1="679.57" x2="1874.5" y2="679.57" stroke="#e2e2e2" stroke-width="1"/>
<text x="1129.8" y="682.87" text-anchor="end" font-size="12" fill="#666">100</text>
<line x1="1130" y1="702.40" x2="1874.5" y2="702.40" stroke="#8c8c8c" stroke-width="1"/>
<text x="1129.8" y="705.70" text-anchor="end" font-size="12" fill="#666">0</text>
<line x1="1130" y1="725.23" x2="1874.5" y2="725.23" stroke="#e2e2e2" stroke-width="1"/>
<text x="1129.8" y="728.53" text-anchor="end" font-size="12" fill="#666">-100</text>
<line x1="1130" y1="748.06" x2="1874.5" y2="748.06" stroke="#e2e2e2" stroke-width="1"/>
<text x="1129.8" y="751.36" text-anchor="end" font-size="12" fill="#666">-200</text>
<line x1="1139.70" y1="611.08" x2="1139.70" y2="758.6" stroke="#8c8c8c" stroke-width="1"/>
<line x1="1244.67" y1="611.08" x2="1244.67" y2="758.6" stroke="#e2e2e2" stroke-width="1"/>
<line x1="1349.64" y1="611.08" x2="1349.64" y2="758.6" stroke="#e2e2e2" stroke-width="1"/>
<line x1="1454.61" y1="611.08" x2="1454.61" y2="758.6" stroke="#e2e2e2" stroke-width="1"/>
<line x1="1559.59" y1="611.08" x2="1559.59" y2="758.6" stroke="#e2e2e2" stroke-width="1"/>
<line x1="1664.56" y1="611.08" x2="1664.56" y2="758.6" stroke="#e2e2e2" stroke-width="1"/>
<line x1="1769.53" y1="611.08" x2="1769.53" y2="758.6" stroke="#e2e2e2" stroke-width="1"/>
<line x1="1874.50" y1="611.08" x2="1874.50" y2="758.6" stroke="#e2e2e2" stroke-width="1"/>
<text x="1192.19" y="768.8" text-anchor="middle" font-size="12" fill="#666">Feb 07</text>
<rect x="1154.40" y="679.57" width="75.58" height="22.83" fill="#81d4fa"/>
<text x="1297.16" y="768.8" text-anchor="middle" font-size="12" fill="#666">Mar</text>
<rect x="1259.37" y="690.30" width="75.58" height="12.10" fill="#81d4fa"/>
<text x="1402.13" y="768.8" text-anchor="middle" font-size="12" fill="#666">Apr</text>
<rect x="1364.34" y="666.79" width="75.58" height="35.61" fill="#81d4fa"/>
<text x="1507.10" y="768.8" text-anchor="middle" font-size="12" fill="#666">May</text>
<rect x="1469.31" y="702.40" width="75.58" height="31.96" fill="#81d4fa"/>
<text x="1612.07" y="768.8" text-anchor="middle" font-size="12" fill="#666">Jun</text>
<rect x="1574.28" y="640.76" width="75.58" height="61.64" fill="#81d4fa"/>
<text x="1717.04" y="768.8" text-anchor="middle" font-size="12" fill="#666">Jul</text>
<rect x="1679.25" y="653.54" width="75.58" height="48.86" fill="#81d4fa"/>
<text x="1822.01" y="768.8" text-anchor="middle" font-size="12" fill="#666">August 07</text>
<line x1="1192.19" y1="622.50" x2="1822.01" y2="622.50" stroke="#f57c00" stroke-width="3"/>
<circle cx="1192.19" cy="622.50" r="2.6" fill="#f57c00"/>
<circle cx="1297.16" cy="622.50" r="2.6" fill="#f57c00"/>
<circle cx="1402.13" cy="622.50" r="2.6" fill="#f57c00"/>
<circle cx="1507.10" cy="622.50" r="2.6" fill="#f57c00"/>
<circle cx="1612.07" cy="622.50" r="2.6" fill="#f57c00"/>
<circle cx="1717.04" cy="622.50" r="2.6" fill="#f57c00"/>
<circle cx="1822.01" cy="622.50" r="2.6" fill="#f57c00"/>
<rect x="1272" y="588.5" width="40" height="13" fill="#81d4fa"/>
<text x="1318.3" y="598.3" font-size="12" fill="#666">Below Average</text>
<rect x="1409" y="588.5" width="40" height="13" fill="#f59d9b"/>
<text x="1455.3" y="598.3" font-size="12" fill="#666">Above Average</text>
<rect x="1546.7" y="589" width="40" height="12" fill="#fff" stroke="#f57c00" stroke-width="3"/>
<text x="1592.7" y="598.3" font-size="12" fill="#666">Average Target Price</text>
<path d="M515.50,905.70 A83.2,83.2 0 1 1 433.02,999.85 L474.06,994.40 A41.8,41.8 0 1 0 515.50,947.10 Z" fill="#1fab6a" stroke="#fff" stroke-width="2" stroke-linejoin="bevel"/>
<path d="M433.02,999.85 A83.2,83.2 0 0 1 515.50,905.70 L515.50,947.10 A41.8,41.8 0 0 0 474.06,994.40 Z" fill="#ee2a35" stroke="#fff" stroke-width="2" stroke-linejoin="bevel"/>
<rect x="397" y="883" width="40" height="12" fill="#1fab6a" stroke="#fff" stroke-width="2"/>
<text x="442.8" y="892" font-size="12" fill="#666">On Time Delivery</text>
<rect x="545.7" y="883" width="40" height="12" fill="#ee2a35" stroke="#fff" stroke-width="2"/>
<text x="591" y="892" font-size="12" fill="#666">Delayed</text>
<path d="M1071.50,905.70 A83.2,83.2 0 0 1 1081.64,906.32 L1076.59,947.41 A41.8,41.8 0 0 0 1071.50,947.10 Z" fill="#1e70c0" stroke="#fff" stroke-width="2" stroke-linejoin="bevel"/>
<path d="M1081.64,906.32 A83.2,83.2 0 1 1 1071.50,905.70 L1071.50,947.10 A41.8,41.8 0 1 0 1076.59,947.41 Z" fill="#f6922f" stroke="#fff" stroke-width="2" stroke-linejoin="bevel"/>
<rect x="969" y="883" width="40" height="12" fill="#1e70c0" stroke="#fff" stroke-width="2"/>
<text x="1015" y="892" font-size="12" fill="#666">Passed</text>
<rect x="1066" y="883" width="40" height="12" fill="#f6922f" stroke="#fff" stroke-width="2"/>
<text x="1112" y="892" font-size="12" fill="#666">Not Passed</text>
<path d="M1627.50,905.60 A83.2,83.2 0 1 1 1548.37,963.09 L1587.75,975.88 A41.8,41.8 0 1 0 1627.50,947.00 Z" fill="#cbdb40" stroke="#fff" stroke-width="2" stroke-linejoin="bevel"/>
<path d="M1548.37,963.09 A83.2,83.2 0 0 1 1627.50,905.60 L1627.50,947.00 A41.8,41.8 0 0 0 1587.75,975.88 Z" fill="#b85ea6" stroke="#fff" stroke-width="2" stroke-linejoin="bevel"/>
<rect x="1543.5" y="883" width="40" height="12" fill="#cbdb40" stroke="#fff" stroke-width="2"/>
<text x="1589.6" y="892" font-size="12" fill="#666">Bids</text>
<rect x="1623.5" y="883" width="40" height="12" fill="#b85ea6" stroke="#fff" stroke-width="2"/>
<text x="1669.4" y="892" font-size="12" fill="#666">No-Bids</text>
</svg>
</body></html>
